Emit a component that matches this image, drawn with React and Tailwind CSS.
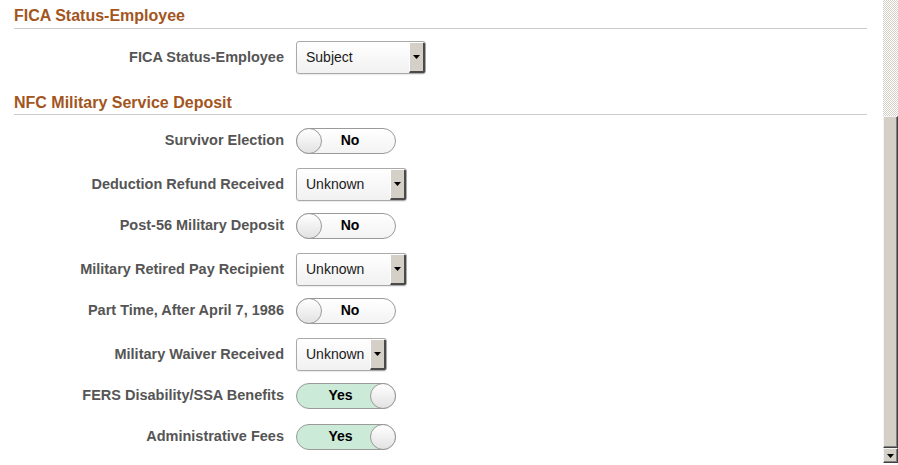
import React from "react";

const rows = [
  { label: "Survivor Election", type: "toggle", on: false },
  { label: "Deduction Refund Received", type: "select", value: "Unknown", width: "w-[111px]" },
  { label: "Post-56 Military Deposit", type: "toggle", on: false },
  { label: "Military Retired Pay Recipient", type: "select", value: "Unknown", width: "w-[111px]" },
  { label: "Part Time, After April 7, 1986", type: "toggle", on: false },
  { label: "Military Waiver Received", type: "select", value: "Unknown", width: "w-[91px]" },
  { label: "FERS Disability/SSA Benefits", type: "toggle", on: true },
  { label: "Administrative Fees", type: "toggle", on: true },
];

function Arrow() {
  return (
    <svg width="7" height="4" viewBox="0 0 7 4">
      <polygon points="0,0 7,0 3.5,4" fill="#000" />
    </svg>
  );
}

function Select({ value, width }) {
  return (
    <div
      className={`flex h-[33px] ${width} overflow-hidden rounded-[3px] border border-[#a9a9a9] bg-gradient-to-b from-white to-[#f1f1f1] shadow-[0_1px_1px_rgba(0,0,0,0.08)]`}
    >
      <span className="flex-1 pl-[9px] text-[14px] leading-[31px] text-[#1a1a1a]">
        {value}
      </span>
      <span className="flex w-[16px] items-center justify-center border-t border-l border-t-white border-l-white border-r-2 border-b-2 border-r-[#4a4a4a] border-b-[#4a4a4a] bg-[#d4d0c8]">
        <Arrow />
      </span>
    </div>
  );
}

function Toggle({ on }) {
  if (on) {
    return (
      <div className="flex h-[26px] w-[100px] items-center rounded-full border border-[#9a9a9a] bg-[#cbead8]">
        <span className="flex-1 pl-[14px] text-center text-[14px] font-bold text-black">
          Yes
        </span>
        <span className="-mr-px h-[26px] w-[26px] rounded-full border border-[#9a9a9a] bg-gradient-to-b from-white to-[#e2e2e2]" />
      </div>
    );
  }
  return (
    <div className="flex h-[26px] w-[100px] items-center rounded-full border border-[#9a9a9a] bg-gradient-to-b from-white to-[#f3f3f3]">
      <span className="-ml-px h-[26px] w-[26px] rounded-full border border-[#9a9a9a] bg-gradient-to-b from-white to-[#e2e2e2]" />
      <span className="flex-1 pr-[17px] text-center text-[14px] font-bold text-black">
        No
      </span>
    </div>
  );
}

function Row({ label, select, children, className = "h-[41px]" }) {
  return (
    <div className={`flex items-center ${className} ${select ? "mt-[3px]" : ""}`}>
      <div className="w-[284px] shrink-0 pt-px text-right text-[14.5px] font-bold text-[#555]">
        {label}
      </div>
      <div className="ml-[12px]">{children}</div>
    </div>
  );
}

function Heading({ text, className }) {
  return (
    <div className={`mr-[16px] ml-[14px] h-[29px] border-b border-[#cccccc] ${className}`}>
      <h2 className="text-[16px] leading-[20px] font-bold text-[#a3551e]">{text}</h2>
    </div>
  );
}

function Scrollbar() {
  return (
    <div className="flex w-[15px] shrink-0 flex-col">
      <div className="h-[116px] bg-[repeating-conic-gradient(#d4d0c8_0_25%,#ffffff_0_50%)] bg-[length:2px_2px]" />
      <div className="h-[332px] border-t border-l border-t-[#f4f4f4] border-l-[#f4f4f4] border-r border-b border-r-[#404040] border-b-[#404040] bg-[#d4d0c8] shadow-[inset_-1px_-1px_0_#808080]" />
      <div className="flex h-[15px] items-center justify-center border-t border-l border-t-[#f4f4f4] border-l-[#f4f4f4] border-r border-b border-r-[#404040] border-b-[#404040] bg-[#d4d0c8] shadow-[inset_-1px_-1px_0_#808080]">
        <Arrow />
      </div>
      <div className="flex-1 bg-white" />
    </div>
  );
}

export default function App() {
  return (
    <div className="flex h-[465px] w-[898px] overflow-hidden bg-white font-['Liberation_Sans',Arial,sans-serif]">
      <div className="flex-1">
        <Heading text="FICA Status-Employee" className="pt-[6px]" />
        <Row label="FICA Status-Employee" className="h-[57px]">
          <Select value="Subject" width="w-[130px]" />
        </Row>
        <Heading text="NFC Military Service Deposit" className="pt-[7px]" />
        <div className="pt-[5px]">
          {rows.map((row) => (
            <Row key={row.label} label={row.label} select={row.type === "select"}>
              {row.type === "select" ? (
                <Select value={row.value} width={row.width} />
              ) : (
                <Toggle on={row.on} />
              )}
            </Row>
          ))}
        </div>
      </div>
      <Scrollbar />
    </div>
  );
}
